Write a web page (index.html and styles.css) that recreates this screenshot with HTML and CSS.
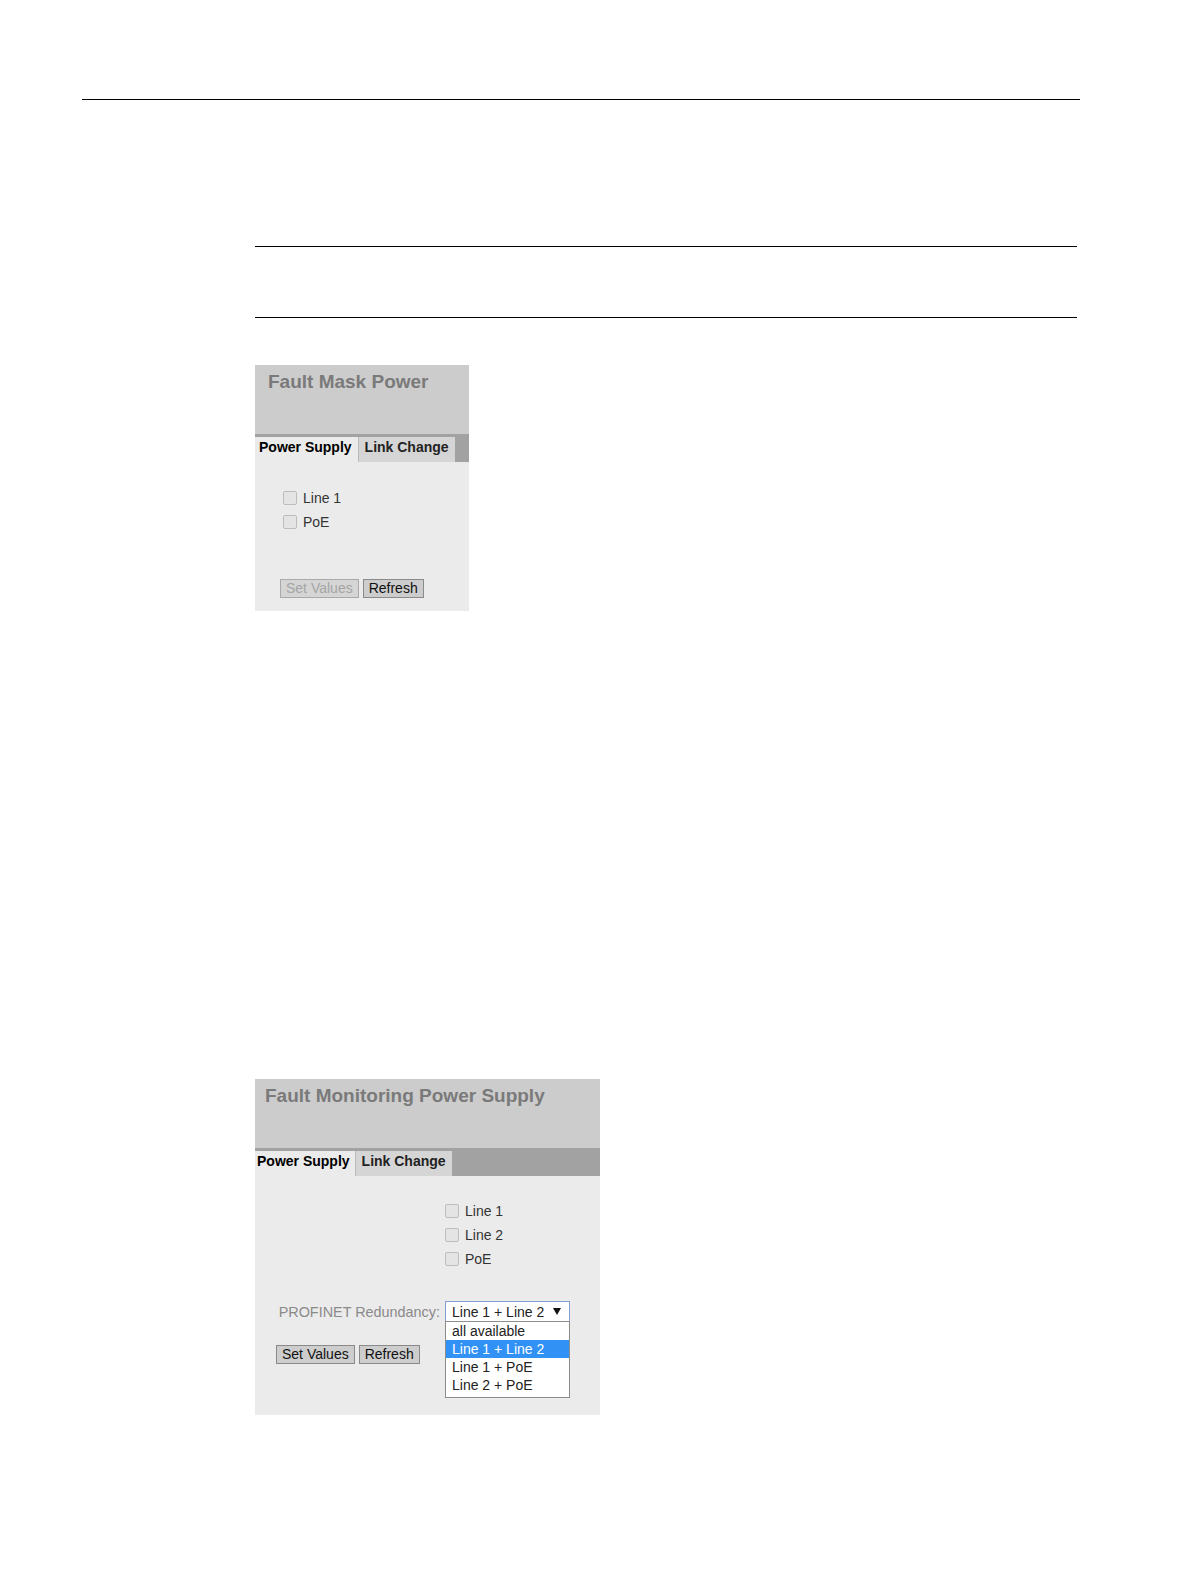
FILE: index.html
```html
<!DOCTYPE html>
<html lang="en">
<head>
<meta charset="utf-8">
<title>Fault Mask Power</title>
<link rel="stylesheet" href="styles.css">
</head>
<body>
<div class="top-rule"></div>
<div class="section">
  <div class="rule rule-a"></div>
  <div class="rule rule-b"></div>

  <div class="panel panel-mask">
    <div class="panel-head">Fault Mask Power</div>
    <div class="tabs">
      <div class="tab tab-active">Power Supply</div>
      <div class="tab tab-idle">Link Change</div>
    </div>
    <div class="panel-body">
      <div class="checks">
        <label class="check"><input type="checkbox" class="cb"><span>Line 1</span></label>
        <label class="check"><input type="checkbox" class="cb"><span>PoE</span></label>
      </div>
      <div class="buttons">
        <button class="btn" disabled>Set Values</button>
        <button class="btn">Refresh</button>
      </div>
    </div>
  </div>

  <div class="panel panel-monitor">
    <div class="panel-head">Fault Monitoring Power Supply</div>
    <div class="tabs">
      <div class="tab tab-active">Power Supply</div>
      <div class="tab tab-idle">Link Change</div>
    </div>
    <div class="panel-body">
      <div class="checks">
        <label class="check"><input type="checkbox" class="cb"><span>Line 1</span></label>
        <label class="check"><input type="checkbox" class="cb"><span>Line 2</span></label>
        <label class="check"><input type="checkbox" class="cb"><span>PoE</span></label>
      </div>
      <div class="redundancy">
        <div class="red-label">PROFINET Redundancy:</div>
        <div class="select">
          <span>Line 1 + Line 2</span>
          <svg class="arrow" width="8" height="7" viewBox="0 0 8 7"><polygon points="0,0 8,0 4,7" fill="#111"/></svg>
          <div class="options">
            <div class="opt">all available</div>
            <div class="opt opt-sel">Line 1 + Line 2</div>
            <div class="opt">Line 1 + PoE</div>
            <div class="opt">Line 2 + PoE</div>
          </div>
        </div>
      </div>
      <div class="buttons">
        <button class="btn">Set Values</button>
        <button class="btn">Refresh</button>
      </div>
    </div>
  </div>
</div>
</body>
</html>
```
FILE: styles.css
```css
body {
  margin: 0;
  background: #fff;
  font-family: "Liberation Sans", Arial, sans-serif;
}

.top-rule {
  margin: 99px 0 0 82px;
  width: 998px;
  border-top: 1px solid #000;
}

.section {
  margin-left: 255px;
  width: 822px;
}

.rule {
  border-top: 1px solid #000;
}
.rule-a { margin-top: 146px; }
.rule-b { margin-top: 70px; }

.panel {
  background: #ebebeb;
}
.panel-mask {
  margin-top: 47px;
  width: 214px;
}
.panel-monitor {
  margin-top: 468px;
  width: 345px;
}

.panel-head {
  box-sizing: border-box;
  height: 69px;
  background: #cccccc;
  padding: 6px 0 0 13px;
  font-size: 19px;
  line-height: 22px;
  font-weight: bold;
  color: #7a7a7a;
}
.panel-monitor .panel-head {
  padding-left: 10px;
}

.tabs {
  box-sizing: border-box;
  height: 28px;
  padding-top: 3px;
  background: #a2a2a2;
  display: flex;
}
.tab {
  box-sizing: border-box;
  height: 25px;
  padding: 2px 6px 0 6px;
  font-size: 14px;
  line-height: 16px;
  font-weight: bold;
}
.tab-active {
  background: #ebebeb;
  color: #000;
  padding-left: 4px;
  padding-right: 6px;
  border-right: 1px solid #b9b9b9;
}
.panel-monitor .tab-active {
  padding-left: 2px;
  padding-right: 5px;
}
.tab-idle {
  background: #d5d5d5;
  color: #222;
}

.panel-body {
  box-sizing: border-box;
}
.panel-mask .panel-body {
  height: 149px;
  padding: 24px 0 0 25px;
}
.panel-mask .checks {
  padding-left: 3px;
}
.panel-monitor .panel-body {
  height: 239px;
  padding-top: 23px;
}
.panel-monitor .checks {
  margin-left: 190px;
}

.check {
  display: flex;
  align-items: center;
  gap: 6px;
  height: 24px;
  font-size: 14px;
  color: #333;
}
.cb {
  appearance: none;
  -webkit-appearance: none;
  margin: 0;
  width: 14px;
  height: 14px;
  box-sizing: border-box;
  border: 1px solid #bdbdbd;
  border-radius: 2px;
  background: #e4e4e4;
}

.buttons {
  display: flex;
  gap: 4px;
}
.panel-mask .buttons {
  margin-top: 45px;
}
.panel-monitor .buttons {
  margin-top: 23px;
  margin-left: 21px;
}
.btn {
  box-sizing: border-box;
  height: 19px;
  margin: 0;
  padding: 0 5px;
  border: 1px solid #8a8a8a;
  border-radius: 0;
  background: #cdcdcd;
  color: #111;
  font-family: "Liberation Sans", Arial, sans-serif;
  font-size: 14px;
  line-height: 17px;
}
.btn:disabled {
  color: #a5a5a5;
  border-color: #a9a9a9;
  background: #d5d5d5;
}

.redundancy {
  display: flex;
  align-items: center;
  margin-top: 30px;
}
.red-label {
  box-sizing: border-box;
  width: 190px;
  padding-right: 5px;
  text-align: right;
  font-size: 14.4px;
  color: #8a8a8a;
}
.select {
  position: relative;
  box-sizing: border-box;
  width: 125px;
  height: 21px;
  padding: 0 8px 0 6px;
  border: 1px solid #809fcf;
  background: #fff;
  display: flex;
  align-items: center;
  justify-content: space-between;
  font-size: 14px;
  color: #222;
}
.arrow {
  display: block;
}
.options {
  position: absolute;
  top: 100%;
  left: -1px;
  width: 125px;
  box-sizing: border-box;
  border: 1px solid #8d8d8d;
  background: #fff;
  padding-bottom: 3px;
}
.opt {
  height: 18px;
  line-height: 18px;
  padding-left: 6px;
  font-size: 14px;
  color: #222;
}
.opt-sel {
  background: #3191f5;
  color: #fff;
}
```
